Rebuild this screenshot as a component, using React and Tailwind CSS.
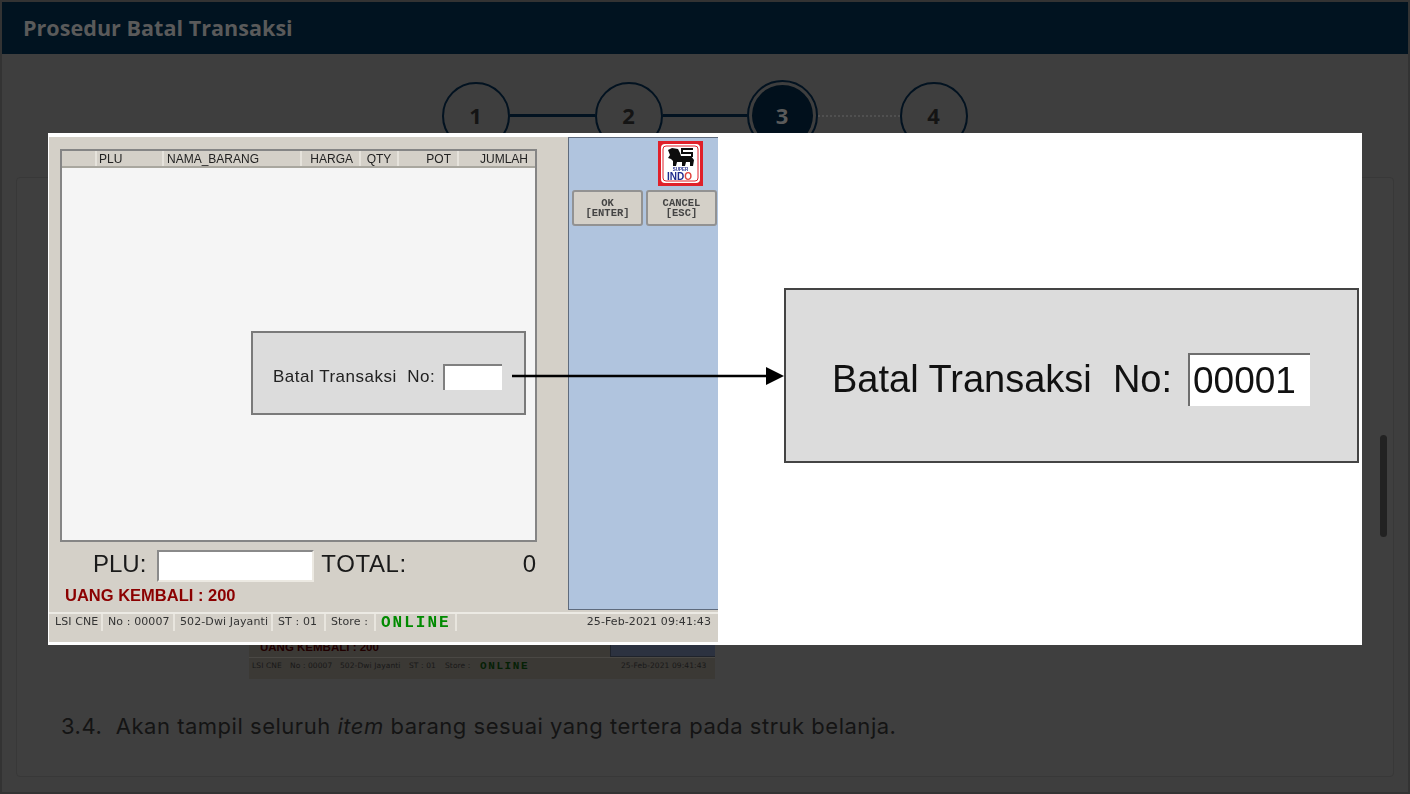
const sans = "font-['Liberation_Sans',Arial,sans-serif]";

function Step({ n }) {
  return (
    <div className="flex h-[68px] w-[68px] items-center justify-center rounded-full border-2 border-[#021220] font-['Open_Sans',sans-serif] text-[22px] font-bold text-[#141414]">
      {n}
    </div>
  );
}

function Logo() {
  return (
    <svg width="45" height="45" viewBox="0 0 45 45" className="block">
      <rect width="45" height="45" fill="#e0202a" />
      <rect x="3" y="3" width="39" height="39" rx="4" fill="#fff" />
      <rect x="5" y="5" width="35" height="35" rx="3" fill="none" stroke="#e0202a" strokeWidth="1" />
      <path d="M10 9L14 7L20 8L22 12L23 15L33 15L36 19L35 25L32 25L32 21L28 21L27 25L24 25L24 21L19 21L18 25L15 25L15 20L13 18L10 17L12 14Z" fill="#0d0d0d" />
      <path d="M35 8H24V12H34V16" fill="none" stroke="#0d0d0d" strokeWidth="2" />
      <text x="22.5" y="30" textAnchor="middle" fontFamily="Liberation Sans" fontSize="4.5" fontWeight="700" fill="#1f2a8c">SUPER</text>
      <text x="9" y="39" fontFamily="Liberation Sans" fontSize="10" fontWeight="700" fill="#1f2a8c">IND<tspan fill="#e0453f">O</tspan></text>
    </svg>
  );
}

function StatusCell({ className, children }) {
  return (
    <div className={"flex h-full shrink-0 items-center border-r-2 border-[#e8e5de] " + className}>{children}</div>
  );
}

function PosButton({ a, b, className }) {
  return (
    <div className={"flex h-[36px] flex-col items-center justify-center rounded-[3px] border-2 border-[#929292] bg-[#d4d0c8] font-['Liberation_Mono',monospace] text-[10.5px] font-bold leading-[10px] text-[#444] " + className}>
      <span>{a}</span>
      <span>{b}</span>
    </div>
  );
}

const cols = [
  ["w-[35px]", ""],
  ["w-[67px] pl-[2px]", "PLU"],
  ["w-[138px] pl-[3px]", "NAMA_BARANG"],
  ["w-[59px] justify-end pr-[6px]", "HARGA"],
  ["w-[38px] justify-center", "QTY"],
  ["w-[60px] justify-end pr-[6px]", "POT"],
  ["flex-1 justify-end pr-[7px]", "JUMLAH"],
];

function PosScreen() {
  return (
    <div className={"mt-[4px] ml-[1px] mb-[3px] flex w-[669px] flex-col bg-[#d4d0c8] blur-[0.3px] " + sans}>
      <div className="flex h-[473px] shrink-0">
        <div className="flex w-[519px] flex-col pl-[11px] pt-[12px]">
          <div className="flex h-[393px] w-[477px] flex-col border-2 border-[#858585] bg-[#f5f5f5]">
            <div className="flex h-[17px] shrink-0 border-b-2 border-[#a9a79f] bg-[#d4d0c8] text-[12px] text-[#222]">
              {cols.map(([c, t], i) => (
                <div key={i} className={"flex items-center border-r-2 border-[#e6e3dc] last:border-r-0 " + c}>{t}</div>
              ))}
            </div>
            <div className="relative flex-1">
              <div className="absolute left-[189px] top-[163px] flex h-[84px] w-[275px] items-center border-2 border-[#7a7a7a] bg-[#dcdcdc] pl-[20px] pt-[7px] text-[17px] tracking-[0.5px] text-[#222]">
                <span className="whitespace-pre">Batal Transaksi  No:</span>
                <div className="ml-[8px] h-[26px] w-[59px] border-t-2 border-l-2 border-[#808080] bg-white" />
              </div>
            </div>
          </div>
          <div className="mt-[8px] flex h-[32px] items-center pl-[33px] text-[24px] text-[#1a1a1a]">
            <span className="relative bottom-[2px]">PLU:</span>
            <div className="ml-[11px] h-[32px] w-[157px] border-2 border-t-[#8a8a8a] border-l-[#8a8a8a] border-r-[#ece9e2] border-b-[#ece9e2] bg-white" />
            <span className="relative bottom-[2px] ml-[7px] tracking-[0.6px]">TOTAL:</span>
            <span className="relative bottom-[2px] ml-[116px]">0</span>
          </div>
          <div className="mt-[1px] pl-[5px] text-[16.5px] font-bold text-[#8b0000]">UANG KEMBALI : 200</div>
        </div>
        <div className="flex flex-1 flex-col border-y border-l border-[#5f6b7d] bg-[#b0c4de]">
          <div className="flex justify-end pr-[15px] pt-[3px]"><Logo /></div>
          <div className="mt-[4px] flex gap-[3px] pl-[3px]">
            <PosButton a="OK" b="[ENTER]" className="w-[71px]" />
            <PosButton a="CANCEL" b="[ESC]" className="w-[71px]" />
          </div>
        </div>
      </div>
      <div className="mt-[2px] flex h-[19px] shrink-0 items-stretch border-t-2 border-[#eceae4] pl-[3px] font-['DejaVu_Sans',sans-serif] text-[11px] tracking-[0.1px] text-[#333]">
        <StatusCell className="w-[51px] pl-[3px] whitespace-nowrap">LSI CNE</StatusCell>
        <StatusCell className="w-[72px] pl-[5px] whitespace-nowrap">No : 00007</StatusCell>
        <StatusCell className="w-[98px] pl-[5px] whitespace-nowrap">502-Dwi Jayanti</StatusCell>
        <StatusCell className="w-[53px] pl-[5px] whitespace-nowrap">ST : 01</StatusCell>
        <StatusCell className="w-[50px] pl-[5px] whitespace-nowrap">Store :</StatusCell>
        <StatusCell className="w-[81px] pl-[5px] font-['Liberation_Mono',monospace] text-[16px] font-bold tracking-[2px] text-[#008a00]">ONLINE</StatusCell>
        <div className="flex flex-1 items-center justify-end whitespace-nowrap pr-[7px]">25-Feb-2021 09:41:43</div>
      </div>
    </div>
  );
}

export default function App() {
  return (
    <div className="relative h-[794px] w-[1410px] overflow-hidden border-2 border-[#333] bg-[#3e3e3e]">
      <div className="flex h-[52px] items-center bg-[#011320] pl-[21px] font-['Open_Sans',sans-serif] text-[21.6px] font-bold text-[#5a5a5a]">
        Prosedur Batal Transaksi
      </div>

      <div className="flex items-center justify-center pt-[26px] pr-[1px]">
        <Step n="1" />
        <div className="h-[3px] w-[85px] bg-[#021220]" />
        <Step n="2" />
        <div className="h-[3px] w-[84px] bg-[#021220]" />
        <div className="flex h-[71px] w-[71px] items-center justify-center rounded-full border-2 border-[#021220] p-[3px]">
          <div className="flex h-full w-full items-center justify-center rounded-full bg-[#01101c] font-['Open_Sans',sans-serif] text-[22px] font-bold text-[#5a5a5a]">3</div>
        </div>
        <div className="w-[82px] border-t-2 border-dotted border-[#505050]" />
        <Step n="4" />
      </div>

      <div className="mx-[14px] mt-[26px] h-[600px] rounded-[4px] border border-[#383838] bg-[#3f3f3f]">
        <div className={"ml-[232px] mt-[30px] flex h-[471px] w-[466px] flex-col justify-end bg-[#3b3935] " + sans}>
          <div className="flex h-[35px] items-end">
            <div className="flex-1 pb-[3px] pl-[11px] text-[11.5px] font-bold leading-[14px] text-[#200000]">UANG KEMBALI : 200</div>
            <div className="h-[20px] w-[105px] border-l border-b border-[#1f232b] bg-[#2c3240]" />
          </div>
          <div className="flex h-[22px] items-center border-t border-[#4a4844] pb-[5px] pl-[3px] font-['DejaVu_Sans',sans-serif] text-[7.5px] tracking-[0.1px] text-[#181818]">
            <span className="w-[38px] shrink-0 whitespace-nowrap">LSI CNE</span>
            <span className="w-[50px] shrink-0 whitespace-nowrap">No : 00007</span>
            <span className="w-[69px] shrink-0 whitespace-nowrap">502-Dwi Jayanti</span>
            <span className="w-[36px] shrink-0 whitespace-nowrap">ST : 01</span>
            <span className="w-[35px] shrink-0 whitespace-nowrap">Store :</span>
            <span className="w-[120px] shrink-0 font-['Liberation_Mono',monospace] text-[11px] font-bold tracking-[1.6px] text-[#052005]">ONLINE</span>
            <span className="whitespace-nowrap pl-[21px]">25-Feb-2021 09:41:43</span>
          </div>
        </div>
        <div className="mt-[33px] pl-[44px] font-['Inter',sans-serif] text-[22px] leading-[28px] tracking-[0.52px] text-[#141414] whitespace-pre">
          3.4.  Akan tampil seluruh <i>item</i> barang sesuai yang tertera pada struk belanja.
        </div>
      </div>

      <div className="absolute left-[1378px] top-[433px] h-[102px] w-[7px] rounded-full bg-[#222]" />

      <div className="absolute left-[46px] top-[131px] flex h-[512px] w-[1314px] bg-white">
        <PosScreen />
        <div className="flex flex-1 items-start pl-[66px] pt-[155px]">
          <div className={"flex h-[175px] w-[575px] items-center border-2 border-[#444] bg-[#dcdcdc] pl-[46px] pt-[8px] blur-[0.3px] text-[38px] text-[#111] " + sans}>
            <span className="whitespace-pre">Batal Transaksi  No:</span>
            <div className="ml-[16px] flex h-[53px] w-[122px] items-center border-t-2 border-l-2 border-[#6e6e6e] bg-white pl-[3px] text-[37px]">00001</div>
          </div>
        </div>
        <svg width="274" height="20" viewBox="0 0 274 20" className="absolute left-[464px] top-[233px]">
          <path d="M0 10H256" stroke="#000" strokeWidth="2.6" />
          <path d="M254 1L272 10L254 19Z" fill="#000" />
        </svg>
      </div>
    </div>
  );
}
